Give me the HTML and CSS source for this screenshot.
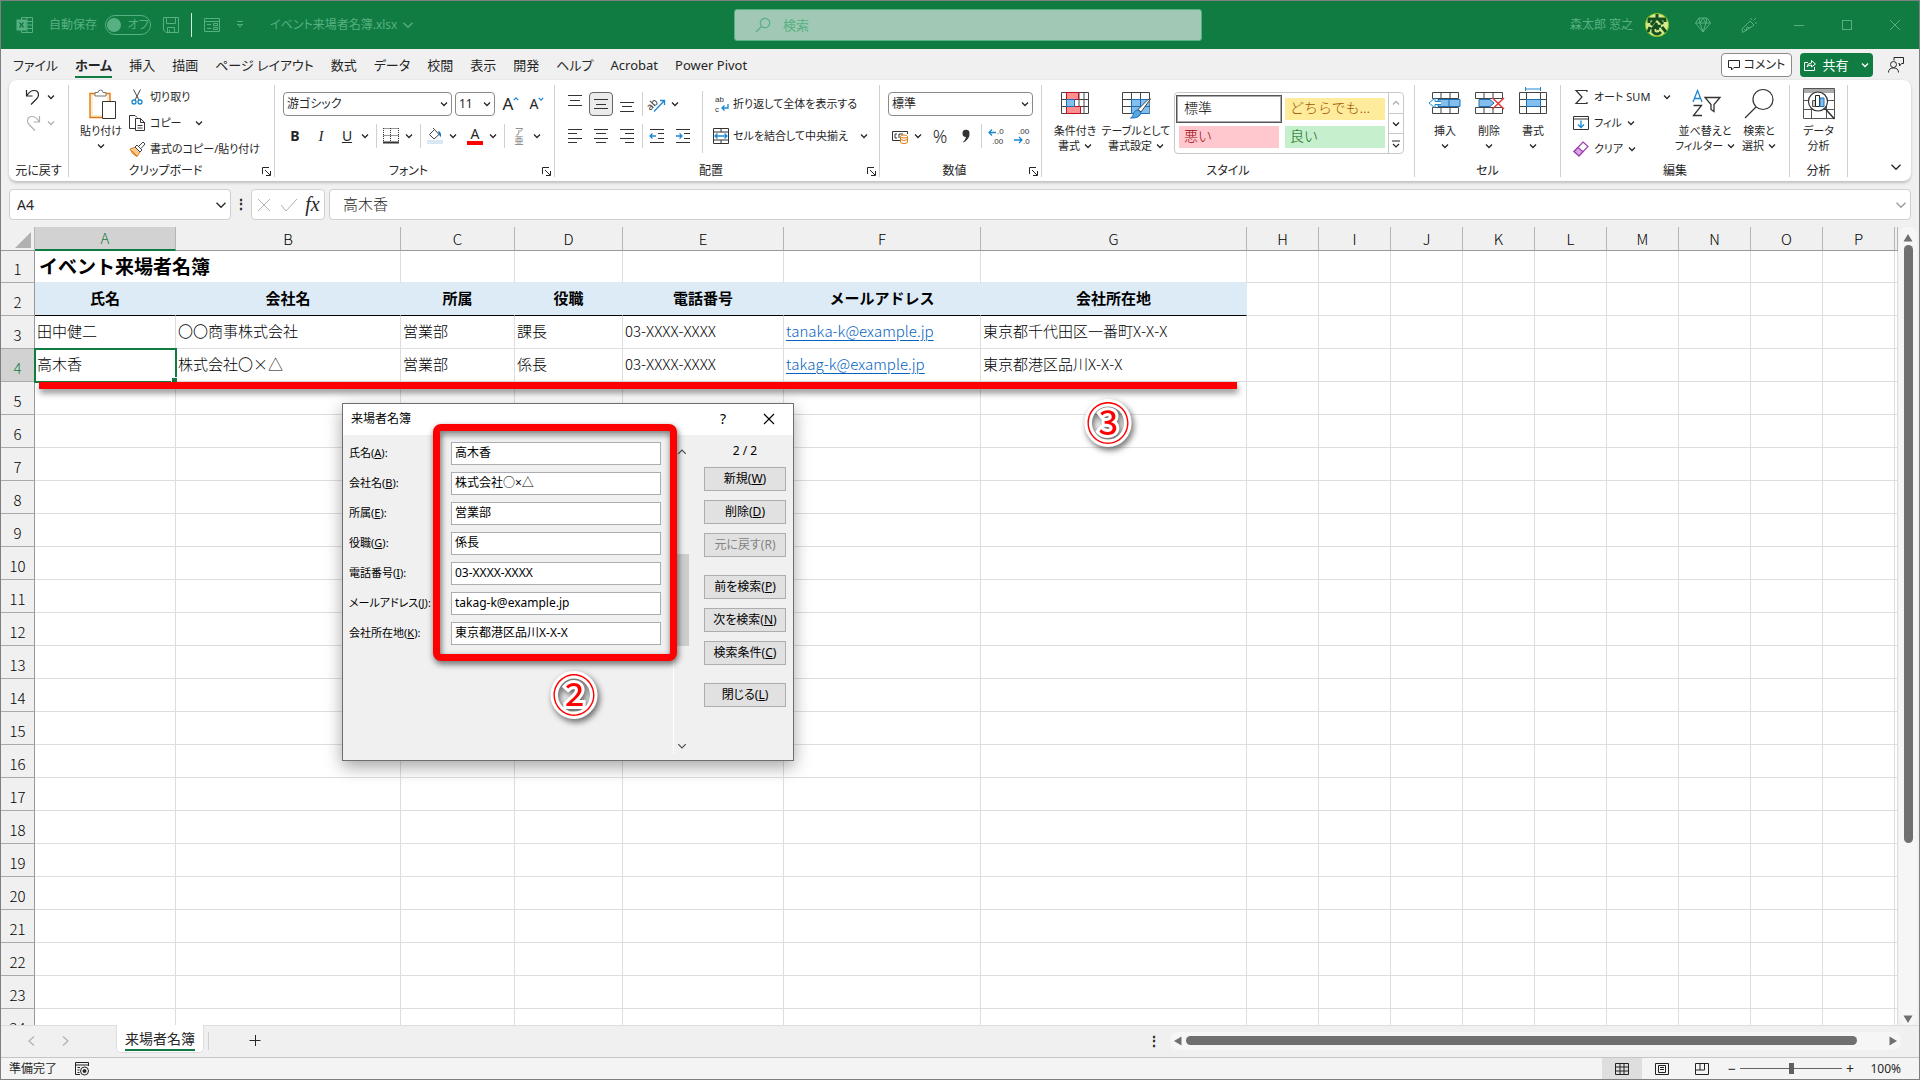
FILE: index.html
```html
<!DOCTYPE html>
<html lang="ja">
<head>
    <meta charset="UTF-8">
    <meta name="viewport" content="width=device-width, initial-scale=1.0">
    <title>イベント来場者名簿.xlsx</title>
    <link rel="stylesheet" href="styles.css">
</head>
<body>
<svg class="sprite" aria-hidden="true">
    <symbol id="chev" viewBox="0 0 8 8"><path d="M1 2.5l3 3 3-3" fill="none" stroke="currentColor" stroke-width="1.3" vector-effect="non-scaling-stroke"/></symbol>
    <symbol id="chev-up" viewBox="0 0 8 8"><path d="M1 5.5l3-3 3 3" fill="none" stroke="currentColor" stroke-width="1.3" vector-effect="non-scaling-stroke"/></symbol>
    <symbol id="launcher" viewBox="0 0 9 9"><path d="M.5 7V.5H7M3 3l5 5M8.500 4v4.500H4" fill="none" stroke="currentColor"/></symbol>
    <symbol id="search" viewBox="0 0 16 16"><g fill="none" stroke="currentColor" stroke-width="1.2"><circle cx="10" cy="6" r="4.700"/><path d="M6.500 9.500L1 15"/></g></symbol>
</svg>
<header class="titlebar">
    <div class="quick">
        <svg class="i16" viewBox="0 0 16 16" fill="none" stroke="currentColor"><path d="M4.500 3V.5h11v15h-11V13M10 .5v15M4.500 4.500h11M10 8h5.500M4.500 11.500h11"/><rect x="0" y="3" width="9" height="10" fill="currentColor"/><path d="M2.500 5.500l4 5M6.500 5.500l-4 5" stroke="#107c41" stroke-width="1.300"/></svg>
        <span class="autosave">自動保存</span>
        <button class="toggle" role="switch" aria-checked="false" aria-label="自動保存"><i></i>オフ</button>
        <button class="tb-save" aria-label="上書き保存"><svg class="i16" viewBox="0 0 16 16" fill="none" stroke="currentColor"><path d="M.5.5h15v15H3l-2.500-2.500zM3.500.5v6h9v-6M4.500 15.500v-5h7v5M6.500 13v2"/></svg></button>
        <span class="tb-sep"></span>
        <button aria-label="フォーム"><svg class="i16" viewBox="0 0 16 16" fill="none" stroke="currentColor"><path d="M.5 1.500h15v13H.5zM.5 4.500h15M3 7.500h4M3 11.500h4M9.500 6.500h4v2h-4zM9.500 10.500h4v2h-4z"/></svg></button>
        <button class="tb-more" aria-label="カスタマイズ"><svg class="i8" viewBox="0 0 8 8" fill="none" stroke="currentColor"><path d="M1 .5h6M1.500 3.500L4 6l2.500-2.500z"/></svg></button>
        <button class="filename">イベント来場者名簿.xlsx <svg class="i12"><use href="#chev"/></svg></button>
    </div>
    <label class="search"><svg class="i16"><use href="#search"/></svg><input type="text" placeholder="検索" aria-label="検索"></label>
    <div class="account">
        <span>森太郎 窓之</span>
        <svg class="avatar" viewBox="0 0 24 24"><circle cx="12" cy="12" r="12" fill="#8fc31f"/><circle cx="12" cy="12" r="11" fill="#d6e98f"/><path d="M12 1v4M3 6h18M4 6v4M20 6v3M10 7L6 12M14 7l4 4M12 10l-3 4 7-1M5 14l-2 5M8 15v4q4 4 8 0M12 14l1 3M17 14l4 5" stroke="#14501f" stroke-width="3" fill="none"/></svg>
        <svg class="i16" viewBox="0 0 16 16" fill="none" stroke="currentColor"><path d="M4 1h8l3.500 5L8 15 .5 6zM.5 6h15M4 1l1 5 3 9 3-9 1-5M5 6l3-5 3 5"/></svg>
        <svg class="i16" viewBox="0 0 16 16" fill="none" stroke="currentColor"><path d="M9 4l4 4-8 5.500-3.500 2L1 12zM3 12l2 2M5 14l1-4 3 1M10 1v2M12.500 3.500L15 1M14 6h2"/></svg>
        <button aria-label="最小化"><svg class="i12" viewBox="0 0 12 12"><path d="M1 6.500h10" stroke="currentColor"/></svg></button>
        <button aria-label="最大化"><svg class="i12" viewBox="0 0 12 12"><rect x="1.500" y="1.500" width="9" height="9" fill="none" stroke="currentColor"/></svg></button>
        <button aria-label="閉じる"><svg class="i12" viewBox="0 0 12 12"><path d="M1 1l10 10M11 1L1 11" stroke="currentColor"/></svg></button>
    </div>
</header>

<nav class="tabs">
    <a href="#">ファイル</a>
    <a href="#" class="active" aria-current="page">ホーム</a>
    <a href="#">挿入</a>
    <a href="#">描画</a>
    <a href="#">ページ レイアウト</a>
    <a href="#">数式</a>
    <a href="#">データ</a>
    <a href="#">校閲</a>
    <a href="#">表示</a>
    <a href="#">開発</a>
    <a href="#">ヘルプ</a>
    <a href="#">Acrobat</a>
    <a href="#">Power Pivot</a>
    <div class="tab-actions">
        <button class="comment"><svg class="i12" viewBox="0 0 12 12" fill="none" stroke="currentColor"><path d="M.5 1.500h11v7H6L3.500 11V8.500h-3z"/></svg>コメント</button>
        <button class="share"><svg class="i12" viewBox="0 0 12 12" fill="none" stroke="currentColor"><path d="M4 3.500H.5v8h10V8M3 8q.5-4 4.500-4V1.500L11.500 5 7.500 8V6Q4.500 6 3 8z"/></svg>共有<svg class="i8"><use href="#chev"/></svg></button>
        <button aria-label="共同編集者"><svg class="i16" viewBox="0 0 16 16" fill="none" stroke="currentColor"><path d="M6 3.500V.5h9.500v6h-2l-2 2.500V6.500h-1M.5 15.500q0-4.500 5-4.500t5 4.500"/><circle cx="5.500" cy="7.500" r="3"/></svg></button>
    </div>
</nav>

<section class="ribbon">
    <div class="group g-undo">
        <div class="body">
            <div class="undo-row"><button aria-label="元に戻す"><svg class="i16" viewBox="0 0 16 16" fill="none" stroke="currentColor" stroke-width="1.200"><path d="M1.500 1v6h6M1.500 7Q5 1.500 9 1.500q4.500 0 4.500 4.500 0 2-2 4L6 15.500"/></svg></button><svg class="i8"><use href="#chev"/></svg></div>
            <div class="undo-row off"><button disabled aria-label="やり直し"><svg class="i16" viewBox="0 0 16 16" fill="none" stroke="currentColor" stroke-width="1.200"><path d="M14.500 1v6h-6M14.500 7Q11 1.500 7 1.500 2.500 1.500 2.500 6q0 2 2 4l5.500 5.500"/></svg></button><svg class="i8"><use href="#chev"/></svg></div>
        </div>
        <div class="label"><span>元に戻す</span></div>
    </div>
    <div class="group g-clip">
        <div class="body">
            <button class="big w56"><svg class="i32" viewBox="0 0 32 32" fill="none"><path d="M5 5.500h20v24H5z" fill="#fdeccb" stroke="#e07a10" stroke-width="1.400"/><path d="M8 8h14v19H8z" fill="#fff"/><path d="M10 8V4.500h3Q13 2 15.500 2T18 4.500h3V8z" fill="#fff" stroke="#777"/><path d="M17.500 13.500h13v17h-13z" fill="#fff" stroke="#333"/></svg><span>貼り付け</span><svg class="i8"><use href="#chev"/></svg></button>
            <div class="stack">
                <button><svg class="i16" viewBox="0 0 16 16" fill="none"><path d="M4.500.5L10 11M11.500.5L6 11" stroke="#444"/><circle cx="5" cy="13" r="2" stroke="#1b87d0" stroke-width="1.300"/><circle cx="11" cy="13" r="2" stroke="#1b87d0" stroke-width="1.300"/></svg>切り取り</button>
                <button><svg class="i16" viewBox="0 0 16 16" fill="#fff" stroke="#333"><path d="M6 13.500H.5V.5H6L8 2.500"/><path d="M6.500 3.500h5l4 4v8h-9zM11.500 3.500v4h4M8.500 10.500h5M8.500 13h5"/></svg>コピー<svg class="i8 far"><use href="#chev"/></svg></button>
                <button><svg class="i16" viewBox="0 0 16 16"><path d="M1 8l6-2 4 5-3 4.500q-5-2-7-7.500z" fill="#fbc98a" stroke="#e07a10"/><path d="M3 10l5 5" stroke="#e07a10"/><path d="M6 6l2-2 5 5-2 2zM9.500 5.500L14 1l2 2-4 4.500" fill="#fff" stroke="#444"/></svg>書式のコピー/貼り付け</button>
            </div>
        </div>
        <div class="label"><span>クリップボード</span><svg class="i9"><use href="#launcher"/></svg></div>
    </div>
    <div class="group g-font">
        <div class="body rows">
            <div class="row fields">
                <div class="combo w169"><select aria-label="フォント"><option>游ゴシック</option></select><svg class="i8"><use href="#chev"/></svg></div>
                <div class="combo w40"><select aria-label="フォント サイズ"><option>11</option></select><svg class="i8"><use href="#chev"/></svg></div>
                <button class="ib letter" aria-label="拡大">A<svg class="i6"><use href="#chev-up"/></svg></button>
                <button class="ib letter small" aria-label="縮小">A<svg class="i6"><use href="#chev"/></svg></button>
            </div>
            <div class="row">
                <button class="ib bold">B</button>
                <button class="ib italic">I</button>
                <span class="split"><button class="ib under">U</button><svg class="i8"><use href="#chev"/></svg></span>
                <span class="sep"></span>
                <span class="split"><button class="ib" aria-label="罫線"><svg class="i16" viewBox="0 0 16 16" fill="none" stroke="#333"><path d="M.5.5h15M.5 7.500h15M.5 0v14M7.500 0v14M15.500 0v14" stroke-dasharray="1 1"/><path d="M0 14.500h16" stroke-width="2"/></svg></button><svg class="i8"><use href="#chev"/></svg></span>
                <span class="sep"></span>
                <span class="split"><button class="ib" aria-label="塗りつぶし"><svg class="i16" viewBox="0 0 16 16" fill="none"><path d="M7.500 1.500l4.500 5-5 4.500-4.500-4.500zM7.500 1.500L6 0" stroke="#444"/><path d="M11 3q3.500.5 3 6-2-1-3-6z" fill="#1b70b8"/><path d="M0 12h16v4H0z" fill="#d9e8f5"/></svg></button><svg class="i8"><use href="#chev"/></svg></span>
                <span class="split"><button class="ib color-a"><span>A</span></button><svg class="i8"><use href="#chev"/></svg></span>
                <span class="sep"></span>
                <span class="split"><button class="ib ruby"><span>ア</span><span>亜</span></button><svg class="i8"><use href="#chev"/></svg></span>
            </div>
        </div>
        <div class="label"><span>フォント</span><svg class="i9"><use href="#launcher"/></svg></div>
    </div>
    <div class="group g-align">
        <div class="body">
            <div class="rows">
                <div class="row">
                    <button class="ib" aria-label="上揃え"><svg class="i16" viewBox="0 0 16 16" stroke="#333"><path d="M1 .5h14M3 5.500h10M1 10.500h14" transform="translate(0 -1)"/></svg></button>
                    <button class="ib pressed" aria-label="上下中央揃え"><svg class="i16" viewBox="0 0 16 16" stroke="#333"><path d="M1 3.500h14M3 8.500h10M1 12.500h14"/></svg></button>
                    <button class="ib" aria-label="下揃え"><svg class="i16" viewBox="0 0 16 16" stroke="#333"><path d="M1 6.500h14M3 10.500h10M1 15.500h14"/></svg></button>
                    <span class="sep"></span>
                    <span class="split"><button class="ib" aria-label="方向"><svg class="i16" viewBox="0 0 16 16" fill="none"><text x="-3" y="11" font-size="10" fill="#333" transform="rotate(-45 4 8)">ab</text><path d="M5 15.500L15 5M11 4.500h4.500V9" stroke="#1b87d0" stroke-width="1.300"/></svg></button><svg class="i8"><use href="#chev"/></svg></span>
                </div>
                <div class="row">
                    <button class="ib" aria-label="左揃え"><svg class="i16" viewBox="0 0 16 16" stroke="#333"><path d="M1 1.500h14M1 5.500h9M1 10.500h14M1 14.500h9"/></svg></button>
                    <button class="ib" aria-label="中央揃え"><svg class="i16" viewBox="0 0 16 16" stroke="#333"><path d="M1 1.500h14M3 5.500h10M1 10.500h14M3 14.500h10"/></svg></button>
                    <button class="ib" aria-label="右揃え"><svg class="i16" viewBox="0 0 16 16" stroke="#333"><path d="M1 1.500h14M6 5.500h9M1 10.500h14M6 14.500h9"/></svg></button>
                    <span class="sep"></span>
                    <button class="ib" aria-label="インデントを減らす"><svg class="i16" viewBox="0 0 16 16" fill="none" stroke="#333"><path d="M1 1.500h14M9 5.500h6M9 10.500h6M1 14.500h14"/><path d="M7 8H1M3.500 5.500L1 8l2.500 2.500" stroke="#1b87d0" stroke-width="1.300"/></svg></button>
                    <button class="ib" aria-label="インデントを増やす"><svg class="i16" viewBox="0 0 16 16" fill="none" stroke="#333"><path d="M1 1.500h14M9 5.500h6M9 10.500h6M1 14.500h14"/><path d="M1 8h6M4.500 5.500L7 8l-2.500 2.500" stroke="#1b87d0" stroke-width="1.300"/></svg></button>
                </div>
            </div>
            <span class="sep tall"></span>
            <div class="rows wide">
                <button class="text-btn"><svg class="i16 tiny" viewBox="0 0 16 16" fill="none"><text x="2" y="6" fill="#333">ab</text><text x="2" y="16" fill="#333">c</text><path d="M15 8v4H9M11.500 9.500L9 12l2.500 2.500" stroke="#1b87d0" stroke-width="1.300"/></svg>折り返して全体を表示する</button>
                <button class="text-btn"><svg class="i16" viewBox="0 0 16 16" fill="none"><path d="M.5.5h15v15H.5zM.5 4h15M.5 12h15M8 .5V4M8 12v3.500" stroke="#333"/><path d="M2 8h12M4.500 5.500L2 8l2.500 2.500M11.500 5.500L14 8l-2.500 2.500" stroke="#1b87d0" stroke-width="1.300"/></svg>セルを結合して中央揃え<svg class="i8 far"><use href="#chev"/></svg></button>
            </div>
        </div>
        <div class="label"><span>配置</span><svg class="i9"><use href="#launcher"/></svg></div>
    </div>
    <div class="group g-num">
        <div class="body rows">
            <div class="row fields">
                <div class="combo w145"><select aria-label="数値の書式"><option>標準</option></select><svg class="i8"><use href="#chev"/></svg></div>
            </div>
            <div class="row">
                <span class="split"><button class="ib" aria-label="通貨"><svg class="i16" viewBox="0 0 16 16" fill="none"><path d="M8 12.500H.5v-9h15V6M5 6H3v4h2M7 10V6h2M11 6H9" stroke="#333"/><path d="M8.500 8.500v5.500q0 1.500 3.500 1.500t3.500-1.500V8.500" fill="#fff" stroke="#e07a10"/><ellipse cx="12" cy="8.500" rx="3.500" ry="1.500" fill="#fff" stroke="#e07a10"/><path d="M8.500 11.500q3.500 2 7 0" stroke="#e07a10"/></svg></button><svg class="i8"><use href="#chev"/></svg></span>
                <button class="ib percent">%</button>
                <button class="ib" aria-label="桁区切り"><svg class="i16" viewBox="0 0 16 16" fill="#333"><path d="M4.500 5.500a3.500 3.500 0 0 1 7-.5q.5 6-6 9.500l-.5-.5q2.500-2 3-5-3.500 0-3.500-3.500z"/></svg></button>
                <span class="sep"></span>
                <button class="ib" aria-label="小数点以下の表示桁数を増やす"><svg class="i16 tiny" viewBox="0 0 16 16" fill="none"><path d="M8 4.500H1M4 1.500l-3 3 3 3" stroke="#1b87d0" stroke-width="1.300"/><text x="9" y="6" fill="#333">.0</text><text x="4" y="16" fill="#333">.00</text></svg></button>
                <button class="ib" aria-label="小数点以下の表示桁数を減らす"><svg class="i16 tiny" viewBox="0 0 16 16" fill="none"><path d="M0 12h8M5 9l3 3-3 3" stroke="#1b87d0" stroke-width="1.300"/><text x="4" y="6" fill="#333">.00</text><text x="9" y="16" fill="#333">.0</text></svg></button>
            </div>
        </div>
        <div class="label"><span>数値</span><svg class="i9"><use href="#launcher"/></svg></div>
    </div>
    <div class="group g-style">
        <div class="body">
            <button class="big w50"><svg class="i32" viewBox="0 0 32 32" fill="none"><path d="M2.500 4.500h27v21h-27zM2.500 11.500h27M2.500 18.500h27M7.500 4.500v21M20 4.500v21M25 4.500v21" stroke="#444"/><path d="M7.500 4.500h12v7h-12zM7.500 18.500h14v7h-14z" fill="#ff8f8f" stroke="#c1121f"/><path d="M7.500 11.500h8v7h-8z" fill="#83beec" stroke="#1b70b8"/></svg><span>条件付き</span><span>書式 <svg class="i8"><use href="#chev"/></svg></span></button>
            <button class="big w68"><svg class="i32" viewBox="0 0 32 32" fill="none"><path d="M2.500 4.500h27v21h-27z" fill="#fff" stroke="#444"/><path d="M11.500 11.500h18v14h-18z" fill="#83beec"/><path d="M2.500 11.500h27M2.500 18.500h27M11.500 4.500v21M20.500 4.500v21" stroke="#444"/><path d="M11.500 11.500h18M11.500 11.500v14h18M20.500 11.500v14M11.500 18.500h18" stroke="#1b70b8"/><path d="M30.500 11L21 24l-3-2.500L28 11.500z" fill="#fff" stroke="#444"/><path d="M18 22l3 2.500q-1 6-10.500 5.500 3-1 3-5 2-3.500 4.500-3z" fill="#5aa6e0" stroke="#1b70b8"/></svg><span>テーブルとして</span><span>書式設定 <svg class="i8"><use href="#chev"/></svg></span></button>
            <div class="gallery">
                <div class="cells">
                    <button class="cell chosen">標準</button>
                    <button class="cell neutral">どちらでも...</button>
                    <button class="cell bad">悪い</button>
                    <button class="cell good">良い</button>
                </div>
                <div class="gallery-nav">
                    <button class="off" aria-label="上へ"><svg class="i8"><use href="#chev-up"/></svg></button>
                    <button aria-label="下へ"><svg class="i8"><use href="#chev"/></svg></button>
                    <button aria-label="その他"><svg class="i8" viewBox="0 0 8 8" fill="none" stroke="currentColor" stroke-width="1.200"><path d="M0 1h8M1 4l3 3 3-3"/></svg></button>
                </div>
            </div>
        </div>
        <div class="label"><span>スタイル</span></div>
    </div>
    <div class="group g-cell">
        <div class="body">
            <button class="big w44"><svg class="i32" viewBox="0 0 32 32" fill="#fff" stroke="#444"><path d="M3.500 4.500h26v6h-26zM3.500 19.500h26v6h-26zM12 4.500v6M21 4.500v6M12 19.500v6M21 19.500v6"/><path d="M9 11.500h22v7H9zM20 11.500v7" fill="#83beec" stroke="#1b70b8"/><path d="M12 13.500H6V10L0 15l6 5v-3.500h6" stroke="#1b87d0"/></svg><span>挿入</span><svg class="i8"><use href="#chev"/></svg></button>
            <button class="big w44"><svg class="i32" viewBox="0 0 32 32" fill="#fff" stroke="#444"><path d="M2.500 4.500h27v6h-27zM2.500 19.500h27v6h-27zM11 4.500v6M20 4.500v6M11 19.500v6M20 19.500v6"/><path d="M6 11.500h11l4 3.500-4 3.500H6z" fill="#83beec" stroke="#1b70b8"/><path d="M19.500 10L31 21M31 10L19.500 21" stroke="#e53935" stroke-width="1.500"/></svg><span>削除</span><svg class="i8"><use href="#chev"/></svg></button>
            <button class="big w44"><svg class="i32" viewBox="0 0 32 32" fill="#fff" stroke="#444"><path d="M2.500 4.500h27v21h-27zM2.500 11.500h27M2.500 18.500h27M9.500 4.500v21M23.500 4.500v21"/><path d="M9.500 11.500h14v7h-14z" fill="#83beec" stroke="#1b70b8"/><path d="M8.500 1h15M8.500-1v4M23.500-1v4" stroke="#1b87d0"/></svg><span>書式</span><svg class="i8"><use href="#chev"/></svg></button>
        </div>
        <div class="label"><span>セル</span></div>
    </div>
    <div class="group g-edit">
        <div class="body">
            <div class="stack">
                <button><svg class="i16" viewBox="0 0 16 16" fill="none" stroke="#333" stroke-width="1.200"><path d="M14 3V1.500H3L9 8l-6 6.500h11V13"/></svg>オート SUM<svg class="i8 far"><use href="#chev"/></svg></button>
                <button><svg class="i16" viewBox="0 0 16 16" fill="none" stroke="#333"><path d="M.5 1.500h15v13H.5zM.5 4h15"/><path d="M8 5.500V12M5 9.500L8 12.500l3-3" stroke="#1b87d0" stroke-width="1.300"/></svg>フィル<svg class="i8"><use href="#chev"/></svg></button>
                <button><svg class="i16" viewBox="0 0 16 16" fill="#fff" stroke="#9b3fae" stroke-width="1.200"><path d="M10 1l5 4.500L6 15 1 10.500z"/><path d="M5 6.500L1 10.500 6 15l4-4.500z" fill="#d9a3e3"/></svg>クリア<svg class="i8"><use href="#chev"/></svg></button>
            </div>
            <button class="big w56"><svg class="i32" viewBox="0 0 32 32" fill="none" stroke-width="1.300"><path d="M4 14L8.500 2.500 13 14M5.500 10.500h6" stroke="#1b87d0"/><path d="M4.500 17.500h8l-8 10h8.500M16 9.500h15l-6 7v7l-3-2v-5z" stroke="#333"/></svg><span>並べ替えと</span><span>フィルター <svg class="i8"><use href="#chev"/></svg></span></button>
            <button class="big w52"><svg class="i32" viewBox="0 0 32 32" fill="none" stroke="#333" stroke-width="1.200"><circle cx="20" cy="11.500" r="10"/><path d="M13 19L2 30"/></svg><span>検索と</span><span>選択 <svg class="i8"><use href="#chev"/></svg></span></button>
        </div>
        <div class="label"><span>編集</span></div>
    </div>
    <div class="group g-data">
        <div class="body">
            <button class="big"><svg class="i32" viewBox="0 0 32 32" fill="#fff" stroke="#555"><path d="M.5.5h31v30H.5zM.5 12.500h31M.5 21.500h31M8.500 12v18M23.500 12v18" /><path d="M1 1h30v4H1z" fill="#aaa" stroke="none"/><circle cx="15" cy="13.500" r="9.500" stroke="#333" stroke-width="1.200"/><path d="M9.500 12.500h4v6h-4z" fill="#ccc"/><path d="M12.500 7.500h4v11h-4z" stroke="#222"/><path d="M17 10h4v8.500h-4z" fill="#83beec" stroke="#1b70b8"/><path d="M22 20.500L31.500 31" stroke="#333" stroke-width="1.500"/></svg><span>データ</span><span>分析</span></button>
        </div>
        <div class="label"><span>分析</span></div>
    </div>
    <button class="collapse" aria-label="リボンを折りたたむ"><svg class="i12"><use href="#chev"/></svg></button>
</section>

<div class="formula-bar">
    <div class="combo name-box"><input type="text" value="A4" aria-label="名前ボックス"><svg class="i12"><use href="#chev"/></svg></div>
    <span class="dots">⋮</span>
    <div class="fx">
        <button class="off" aria-label="キャンセル"><svg class="i16" viewBox="0 0 16 16"><path d="M2 2l12 12M14 2L2 14" stroke="currentColor"/></svg></button>
        <button class="off" aria-label="入力"><svg class="i16" viewBox="0 0 16 16"><path d="M0 8l5 6L16 2" fill="none" stroke="currentColor"/></svg></button>
        <button class="fx-label">fx</button>
    </div>
    <div class="combo formula"><input type="text" value="高木香" aria-label="数式バー"><svg class="i12"><use href="#chev"/></svg></div>
</div>

<main class="sheet">
    <div class="grid-wrap">
        <table class="grid">
            <colgroup>
                <col class="c-head"><col class="c-a"><col class="c-b"><col class="c-c"><col class="c-d"><col class="c-e"><col class="c-f"><col class="c-g">
                <col class="c-n" span="9"><col>
            </colgroup>
            <thead>
                <tr><th class="corner"><svg viewBox="0 0 16 16"><path d="M16 0v16H0z" fill="#b1b1b1"/></svg></th><th class="on">A</th><th>B</th><th>C</th><th>D</th><th>E</th><th>F</th><th>G</th><th>H</th><th>I</th><th>J</th><th>K</th><th>L</th><th>M</th><th>N</th><th>O</th><th>P</th><th></th></tr>
            </thead>
            <tbody id="rows"></tbody>
        </table>
    </div>
    <div class="vscroll">
        <svg viewBox="0 0 10 8"><path d="M5 0l4.500 7.500h-9z" fill="#707070"/></svg>
        <div class="vtrack"><div class="vthumb"></div></div>
        <svg viewBox="0 0 10 8"><path d="M5 8L.5.5h9z" fill="#707070"/></svg>
    </div>
</main>

<div class="sheet-tabs">
    <button class="off" aria-label="前のシート"><svg class="i12" viewBox="0 0 12 12"><path d="M8 1.500L3 6l5 4.500" fill="none" stroke="currentColor" stroke-width="1.200"/></svg></button>
    <button class="off" aria-label="次のシート"><svg class="i12" viewBox="0 0 12 12"><path d="M4 1.500L9 6l-5 4.500" fill="none" stroke="currentColor" stroke-width="1.200"/></svg></button>
    <a class="sheet-tab" href="#"><span>来場者名簿</span></a>
    <span class="tab-sep"></span>
    <button class="add" aria-label="新しいシート"><svg class="i12" viewBox="0 0 12 12"><path d="M.5 5.500h11M6.500 0v11" stroke="currentColor"/></svg></button>
    <span class="dots">⋮</span>
    <div class="hscroll">
        <svg viewBox="0 0 8 10"><path d="M0 5L7.500.5v9z" fill="#707070"/></svg>
        <div class="htrack"><div class="hthumb"></div></div>
        <svg viewBox="0 0 8 10"><path d="M8 5L.5.5v9z" fill="#707070"/></svg>
    </div>
</div>

<footer class="status">
    <span>準備完了</span>
    <svg class="i14" viewBox="0 0 14 14" fill="none" stroke="#222"><path d="M5 12.500H.5V.5h13V4M.5 3h13M2.500 5.500H5M2.500 8h2M2.500 10.500h2"/><circle cx="9.500" cy="9" r="4"/><circle cx="9.500" cy="9" r="1.500" fill="#222"/></svg>
    <div class="views">
        <button class="current" aria-label="標準"><svg class="i14" viewBox="0 0 14 14" fill="none" stroke="#222"><path d="M.5 1.500h13v11H.5zM5 1.500v11M9 1.500v11M.5 5h13M.5 9h13"/></svg></button>
        <button aria-label="ページ レイアウト"><svg class="i14" viewBox="0 0 14 14" fill="none" stroke="#222"><path d="M.5 1.500h13v11H.5zM3.500 3.500h7v7h-7zM5 5.500h4M5 7.500h4"/></svg></button>
        <button aria-label="改ページ プレビュー"><svg class="i14" viewBox="0 0 14 14" fill="none" stroke="#222"><path d="M.5 1.500h13v11H.5zM.5 8h9V1.500M5 1.500V8"/></svg></button>
    </div>
    <button class="zoom-btn">−</button>
    <input class="zoom" type="range" min="0" max="100" value="50" aria-label="ズーム">
    <button class="zoom-btn">+</button>
    <span class="percent-label">100%</span>
</footer>

<div class="dialog" role="dialog" aria-label="来場者名簿">
    <div class="dialog-title">
        <span>来場者名簿</span>
        <button>?</button>
        <button aria-label="閉じる"><svg class="i12" viewBox="0 0 12 12"><path d="M1 1l10 10M11 1L1 11" stroke="currentColor" stroke-width="1.200"/></svg></button>
    </div>
    <form class="dialog-body">
        <div class="form-rows">
            <label for="f1">氏名(<u>A</u>):</label><input type="text" id="f1" value="高木香">
            <label for="f2">会社名(<u>B</u>):</label><input type="text" id="f2" value="株式会社○×△">
            <label for="f3">所属(<u>E</u>):</label><input type="text" id="f3" value="営業部">
            <label for="f4">役職(<u>G</u>):</label><input type="text" id="f4" value="係長">
            <label for="f5">電話番号(<u>I</u>):</label><input type="text" id="f5" value="03-XXXX-XXXX">
            <label for="f6">メールアドレス(<u>J</u>):</label><input type="text" id="f6" value="takag-k@example.jp">
            <label for="f7">会社所在地(<u>K</u>):</label><input type="text" id="f7" value="東京都港区品川X-X-X">
        </div>
        <div class="dialog-scroll">
            <svg class="i10"><use href="#chev-up"/></svg>
            <div class="dialog-thumb"></div>
            <svg class="i10"><use href="#chev"/></svg>
        </div>
        <div class="dialog-buttons">
            <span>2 / 2</span>
            <button type="button">新規(<u>W</u>)</button>
            <button type="button">削除(<u>D</u>)</button>
            <button type="button" disabled>元に戻す(R)</button>
            <button type="button" class="first">前を検索(<u>P</u>)</button>
            <button type="button">次を検索(<u>N</u>)</button>
            <button type="button">検索条件(<u>C</u>)</button>
            <button type="button" class="first">閉じる(<u>L</u>)</button>
        </div>
    </form>
</div>
<div class="mark-line"></div>
<div class="mark-box"></div>
<span class="mark-num two">②</span>
<span class="mark-num three">③</span>

<script>
    const rows = [
        ['イベント来場者名簿'],
        ['氏名', '会社名', '所属', '役職', '電話番号', 'メールアドレス', '会社所在地'],
        ['田中健二', '〇〇商事株式会社', '営業部', '課長', '03-XXXX-XXXX', 'tanaka-k@example.jp', '東京都千代田区一番町X-X-X'],
        ['高木香', '株式会社〇×△', '営業部', '係長', '03-XXXX-XXXX', 'takag-k@example.jp', '東京都港区品川X-X-X']
    ];

    // メールアドレスだけリンクにする
    function cell(value) {
        return value.includes('@') ? `<a href="mailto:${value}">${value}</a>` : value;
    }

    let html = '';
    for (let r = 1; r <= 24; r++) {
        const data = rows[r - 1] || [];
        html += `<tr class="r${r}"><th class="${r === 4 ? 'on' : ''}">${r}</th>`;
        for (let c = 0; c < 17; c++) {
            html += `<td>${cell(data[c] || '')}</td>`;
        }
        html += '</tr>';
    }
    document.getElementById('rows').innerHTML = html;

    // 最後の入力欄の末尾にカーソルを置く
    const last = document.getElementById('f7');
    last.focus();
    last.setSelectionRange(last.value.length, last.value.length);
</script>
</body>
</html>
```
FILE: styles.css
```css
:root {
    --green: #107c41;
    --muted: #57b083;
    --chrome: #f0f0f0;
    --line: #d0d0d0;
    --grid: #dedede;
    --text: #262626;
    --red: #ff0000;
}
* {
    box-sizing: border-box;
}
body {
    margin: 0;
    height: 100vh;
    overflow: hidden;
    display: flex;
    flex-direction: column;
    position: relative;
    border: 1px solid #7f7f7f;
    background: var(--chrome);
    color: var(--text);
    font: 12px/16px "Noto Sans", "Noto Sans CJK JP", sans-serif;
    font-feature-settings: "palt";
}
button, input, select {
    font: inherit;
    font-feature-settings: inherit;
    color: inherit;
    background: none;
    border: 0;
    padding: 0;
    margin: 0;
}
button {
    display: flex;
    align-items: center;
    justify-content: center;
    white-space: nowrap;
}
input, select {
    min-width: 0;
    outline: none;
}
a {
    color: inherit;
    text-decoration: none;
}
svg {
    flex: none;
    display: block;
    overflow: visible;
}
.sprite {
    display: none;
}
.i6 { width: 6px; height: 6px; color: #1b87d0; }
.i8 { width: 8px; height: 8px; }
.i9 { width: 9px; height: 9px; }
.i10 { width: 10px; height: 10px; }
.i12 { width: 12px; height: 12px; }
.i14 { width: 14px; height: 14px; }
.i16 { width: 16px; height: 16px; }
.i32 { width: 32px; height: 32px; }
.tiny {
    font: 8px "Liberation Sans", sans-serif;
}
.off {
    color: #b0b0b0;
}

/* title bar */
.titlebar {
    flex: none;
    height: 48px;
    display: grid;
    grid-template-columns: minmax(0, 1fr) 468px minmax(0, 1fr);
    align-items: center;
    padding-left: 16px;
    background: var(--green);
    color: var(--muted);
}
.quick {
    display: flex;
    align-items: center;
    gap: 12px;
    white-space: nowrap;
}
.autosave {
    margin-left: 4px;
    margin-right: -4px;
}
.toggle {
    width: 46px;
    height: 20px;
    border: 1px solid var(--muted);
    border-radius: 10px;
    gap: 6px;
}
.toggle i {
    width: 14px;
    height: 14px;
    border-radius: 50%;
    background: var(--muted);
}
.tb-sep {
    width: 1px;
    height: 24px;
    background: #d5eadf;
}
.tb-more {
    margin-left: 4px;
}
.filename {
    margin-left: 14px;
    font-size: 12px;
    gap: 5px;
}
.search {
    height: 32px;
    display: flex;
    align-items: center;
    gap: 12px;
    padding-left: 20px;
    background: #a0c8b4;
    border: 1px solid var(--muted);
    border-radius: 3px;
    font-size: 13px;
}
.search input::placeholder {
    color: var(--muted);
    opacity: 1;
}
.account {
    justify-self: end;
    display: flex;
    align-items: center;
    white-space: nowrap;
    gap: 30px;
    margin-right: 18px;
}
.account .avatar {
    width: 24px;
    height: 24px;
    margin: 0 -4px 0 -18px;
}
.account button {
    margin-left: 6px;
}

/* tabs */
.tabs {
    flex: none;
    height: 31px;
    display: flex;
    align-items: center;
    gap: 17px;
    padding: 0 15px 0 12px;
    font-size: 13px;
    white-space: nowrap;
}
.tabs a {
    padding: 5px 0 3px;
    border-bottom: 2px solid transparent;
}
.tabs .active {
    font-weight: bold;
    border-color: var(--green);
}
.tab-actions {
    display: flex;
    align-items: center;
    gap: 8px;
    margin-left: auto;
}
.tab-actions button {
    height: 24px;
    gap: 4px;
}
.tab-actions button:last-child {
    margin-left: 7px;
}
.tab-actions .comment {
    width: 71px;
    background: #fff;
    border: 1px solid #8a8a8a;
    border-radius: 4px;
    font-size: 12px;
}
.tab-actions .share {
    width: 73px;
    background: var(--green);
    color: #fff;
    border-radius: 4px;
    gap: 6px;
}
.share .i8 {
    margin-left: 6px;
}

/* ribbon */
.ribbon {
    flex: none;
    height: 102px;
    display: flex;
    margin: 0 8px;
    padding: 5px 0 4px;
    background: #fff;
    border-radius: 8px;
    border-bottom: 1px solid #c6c6c6;
    box-shadow: 0 1px 3px rgba(0, 0, 0, 0.2);
}
.group {
    flex: none;
    display: flex;
    flex-direction: column;
    justify-content: space-between;
    border-right: 1px solid var(--line);
}
.g-undo { width: 60px; }
.g-clip { width: 206px; }
.g-font { width: 280px; }
.g-align { width: 325px; }
.g-num { width: 162px; }
.g-style { width: 373px; }
.g-cell { width: 146px; }
.g-edit { width: 229px; }
.g-data { width: 58px; }
.body {
    display: flex;
}
.g-undo .body {
    flex-direction: column;
    gap: 2px;
    padding-left: 16px;
}
.undo-row {
    height: 24px;
    display: flex;
    align-items: center;
    gap: 6px;
}
.g-clip .body {
    padding-left: 4px;
}
.g-font .body, .g-num .body, .g-align .body {
    padding-left: 7px;
}
.g-style .body, .g-cell .body {
    padding-left: 8px;
}
.g-edit .body {
    padding-left: 12px;
}
.g-data .body {
    justify-content: center;
}
.label {
    display: flex;
    line-height: 12px;
}
.label span {
    flex: 1;
    text-align: center;
}
.label .i9 {
    margin: 2px 3px 0 0;
}
.big {
    flex-direction: column;
    justify-content: flex-start;
    padding-top: 3px;
    font-size: 11px;
    line-height: 15px;
}
.big .i32 {
    margin-bottom: 3px;
}
.big > .i8 {
    margin-top: 4px;
}
.big span {
    display: flex;
    align-items: center;
    gap: 4px;
}
.w44 { width: 44px; }
.w50 { width: 50px; }
.w52 { width: 52px; }
.w56 { width: 56px; }
.w68 { width: 68px; margin: 0 4px 0 2px; }
.w40 { width: 40px; }
.w145 { width: 145px; }
.w169 { width: 169px; }
.stack {
    display: flex;
    flex-direction: column;
    align-items: flex-start;
    gap: 2px;
}
.stack button {
    height: 24px;
    gap: 5px;
    font-size: 11px;
}
.far {
    margin-left: 8px;
}
.g-edit .stack {
    width: 104px;
}
.rows {
    display: flex;
    flex-direction: column;
    gap: 8px;
    padding-top: 7px;
}
.row {
    height: 24px;
    display: flex;
    align-items: center;
}
.fields {
    padding-left: 1px;
}
.fields .combo {
    margin-right: 3px;
}
.combo {
    display: grid;
    align-items: center;
    background: #fff;
}
.combo > * {
    grid-area: 1 / 1;
}
.combo select, .combo input {
    appearance: none;
    height: 100%;
    padding: 0 3px;
}
.combo svg {
    justify-self: end;
    margin-right: 3px;
    pointer-events: none;
}
.row .combo {
    height: 24px;
    border: 1px solid #8a8a8a;
    border-radius: 4px;
}
.ib {
    width: 26px;
    height: 24px;
    font-size: 14px;
}
.split {
    display: flex;
    align-items: center;
    width: 38px;
    margin-right: 2px;
}
.split > .i8 {
    margin-left: 1px;
}
.sep {
    width: 1px;
    height: 24px;
    margin: 0 1px 0 2px;
    background: var(--line);
}
.sep.tall {
    height: 62px;
    margin: 6px 10px 0 6px;
}
.letter {
    font-size: 17px;
    align-items: center;
}
.letter svg {
    align-self: flex-start;
    margin-top: 4px;
}
.letter.small {
    font-size: 14px;
}
.bold {
    font-weight: bold;
}
.italic {
    font-family: "Liberation Serif", serif;
    font-style: italic;
    font-size: 15px;
}
.under {
    text-decoration: underline;
}
.color-a span {
    width: 16px;
    height: 18px;
    line-height: 14px;
    border-bottom: 4px solid var(--red);
}
.ruby {
    flex-direction: column;
    color: #777;
    font-size: 9px;
    line-height: 9px;
}
.percent {
    font-size: 18px;
    font-weight: 300;
}
.pressed {
    width: 24px;
    margin: 0 1px;
    background: #ebebeb;
    border: 1px solid #666;
    border-radius: 4px;
}
.text-btn {
    height: 24px;
    gap: 4px;
    align-self: flex-start;
    font-size: 11px;
}
.gallery {
    display: flex;
    height: 62px;
    margin-top: 7px;
    border: 1px solid #c8c8c8;
    border-radius: 4px;
}
.cells {
    display: grid;
    grid-template-columns: 106px 106px;
    grid-auto-rows: 28px;
    padding: 2px 0 0 1px;
}
.cell {
    border: 3px solid transparent;
    background-clip: padding-box;
    justify-content: flex-start;
    padding: 0 0 4px 5px;
    font-size: 14px;
    font-weight: 300;
    font-family: "Noto Sans CJK JP", sans-serif;
    font-feature-settings: normal;
}
.cell.chosen {
    border: 1px solid #555;
    outline: 1px solid #aaa;
    outline-offset: -2px;
    padding-left: 7px;
    color: #000;
}
.neutral { background-color: #ffeb9c; color: #9c5700; }
.bad { background-color: #ffc7ce; color: #9c0006; }
.good { background-color: #c6efce; color: #006100; }
.gallery-nav {
    display: grid;
    grid-template-rows: repeat(3, 1fr);
    width: 15px;
    border-left: 1px solid #c8c8c8;
}
.gallery-nav button + button {
    border-top: 1px solid #c8c8c8;
}
.collapse {
    margin: auto 9px 4px auto;
}

/* formula bar */
.formula-bar {
    flex: none;
    display: flex;
    height: 31px;
    margin: 7px 8px;
    font-size: 14px;
}
.formula-bar > div {
    background: #fff;
    border: 1px solid var(--line);
    border-radius: 4px;
}
.name-box {
    width: 222px;
}
.formula-bar .combo input {
    padding-left: 7px;
}
.dots {
    width: 20px;
    text-align: center;
    line-height: 30px;
    font-weight: bold;
}
.fx {
    width: 74px;
    display: flex;
    align-items: center;
    justify-content: space-around;
}
.fx-label {
    font: italic 20px "Liberation Serif", serif;
}
.formula-bar .formula {
    flex: 1;
    margin-left: 4px;
    font-size: 15px;
    font-weight: 300;
}
.formula-bar .formula input {
    padding: 0 0 3px 13px;
    font-family: "Noto Sans CJK JP", sans-serif;
    font-feature-settings: normal;
}
.formula svg {
    color: #999;
}

/* sheet */
.sheet {
    flex: 1;
    min-height: 0;
    display: flex;
}
.grid-wrap {
    flex: 1;
    min-width: 0;
    overflow: hidden;
}
.grid {
    width: 100%;
    table-layout: fixed;
    border-spacing: 0;
    background: #fff;
    color: #000;
    font: 15px/22px "Noto Sans CJK JP", sans-serif;
    font-feature-settings: normal;
    font-kerning: none;
}
.c-head { width: 34px; }
.c-a { width: 141px; }
.c-b { width: 225px; }
.c-c { width: 114px; }
.c-d { width: 108px; }
.c-e { width: 161px; }
.c-f { width: 197px; }
.c-g { width: 266px; }
.c-n { width: 72px; }
.grid th {
    padding: 0;
    background: var(--chrome);
    border-right: 1px solid #999;
    font-weight: 300;
}
.grid thead th {
    height: 24px;
    border-bottom: 1px solid #999;
    border-right-color: #b5b5b5;
    line-height: 22px;
}
.grid thead .on {
    background: #d2d2d2;
    color: var(--green);
    border-bottom: 2px solid var(--green);
}
.corner svg {
    width: 16px;
    height: 16px;
    margin: 3px 0 0 14px;
}
.grid tbody th {
    height: 33px;
    padding-bottom: 2px;
    border-bottom: 1px solid #aaa;
    vertical-align: bottom;
}
.grid tbody .on {
    background: #d2d2d2;
    color: var(--green);
}
.grid td {
    padding: 0 2px 2px;
    border-right: 1px solid var(--grid);
    border-bottom: 1px solid var(--grid);
    white-space: nowrap;
    font-weight: 300;
}
.grid .r1 th {
    height: 32px;
}
.r1 td:nth-child(-n+8) {
    border-bottom-color: #ddebf7;
}
.grid .r1 td:nth-child(2) {
    border-right-color: transparent;
    padding-left: 4px;
    font-size: 19px;
    font-weight: bold;
}
.grid .r2 td:nth-child(-n+8) {
    background: #ddebf7;
    border-right-color: #ddebf7;
    border-bottom-color: #000;
    text-align: center;
    font-weight: bold;
}
.r4 td:nth-child(2) {
    position: relative;
    outline: 2px solid var(--green);
    outline-offset: -1px;
}
.r4 td:nth-child(2)::after {
    content: "";
    position: absolute;
    right: -2px;
    bottom: -2px;
    width: 5px;
    height: 5px;
    background: var(--green);
    border: solid #fff;
    border-width: 1px 0 0 1px;
}
.grid a {
    color: #0563c1;
    text-decoration: underline;
    text-underline-offset: 3px;
}
.vscroll {
    width: 18px;
    margin: 0 2px 0 1px;
    padding: 7px 0 2px;
    display: flex;
    flex-direction: column;
    align-items: center;
    gap: 3px;
    background: #f6f6f6;
    border-radius: 8px;
}
.vscroll svg {
    width: 10px;
    height: 8px;
}
.vtrack {
    flex: 1;
}
.vthumb {
    width: 9px;
    height: 78%;
    border-radius: 5px;
    background: #707070;
}

/* sheet tabs */
.sheet-tabs {
    flex: none;
    height: 32px;
    display: flex;
    align-items: center;
    padding: 0 18px 2px 25px;
    border-top: 1px solid var(--grid);
}
.sheet-tabs > button + button {
    margin-left: 21px;
}
.sheet-tab {
    align-self: flex-start;
    height: 28px;
    margin: -1px 4px 0 45px;
    padding: 3px 8px 0;
    background: #fff;
    border: 1px solid var(--grid);
    border-top: 0;
    border-radius: 0 0 5px 5px;
    font-size: 14px;
}
.sheet-tab span {
    display: block;
    line-height: 21px;
    border-bottom: 2px solid var(--green);
}
.tab-sep {
    width: 1px;
    height: 18px;
    background: var(--line);
}
.add {
    margin-left: 40px;
}
.sheet-tabs .dots {
    margin-left: auto;
    font-size: 14px;
}
.hscroll {
    width: 39%;
    height: 18px;
    margin-left: 6px;
    padding: 0 4px;
    display: flex;
    align-items: center;
    gap: 4px;
    background: #f6f6f6;
    border-radius: 8px;
}
.hscroll svg {
    width: 8px;
    height: 10px;
}
.htrack {
    flex: 1;
}
.hthumb {
    width: 96%;
    height: 9px;
    border-radius: 5px;
    background: #707070;
}

/* status bar */
.status {
    flex: none;
    height: 22px;
    display: flex;
    align-items: center;
    padding: 0 18px 0 8px;
    background: #f4f4f4;
    border-top: 1px solid #c6c6c6;
}
.status > svg {
    margin-left: 18px;
}
.views {
    display: flex;
    align-self: stretch;
    margin: 0 2px 0 auto;
}
.views button {
    width: 40px;
}
.views .current {
    background: #dedede;
}
.zoom-btn {
    width: 16px;
    font-size: 14px;
}
.zoom {
    appearance: none;
    width: 102px;
    height: 1px;
    background: #666;
}
.zoom::-webkit-slider-thumb {
    appearance: none;
    width: 5px;
    height: 11px;
    background: #606060;
}
.percent-label {
    width: 43px;
    text-align: right;
}

/* form dialog */
.dialog {
    position: absolute;
    left: 341px;
    top: 402px;
    width: 452px;
    height: 358px;
    display: flex;
    flex-direction: column;
    background: var(--chrome);
    border: 1px solid #6e6e6e;
    box-shadow: 0 6px 16px rgba(0, 0, 0, 0.35);
    color: #000;
}
.dialog-title {
    height: 31px;
    display: flex;
    align-items: center;
    padding: 0 18px 1px 8px;
    gap: 34px;
    background: #fff;
}
.dialog-title span {
    flex: 1;
}
.dialog-title button {
    width: 12px;
    font-size: 14px;
}
.dialog-body {
    flex: 1;
    display: flex;
    padding: 0 7px 6px 6px;
}
.form-rows {
    flex: 1;
    display: grid;
    grid-template-columns: 102px 210px;
    grid-auto-rows: 23px;
    row-gap: 7px;
    padding-top: 7px;
    white-space: nowrap;
}
.form-rows label {
    font-size: 11px;
    line-height: 22px;
}
.form-rows input {
    padding: 0 3px 2px;
    background: #fff;
    border: 1px solid #abadb3;
}
.dialog-scroll {
    width: 16px;
    display: flex;
    flex-direction: column;
    align-items: center;
    justify-content: space-between;
    padding: 12px 0 3px;
    border-left: 1px solid #fff;
    color: #505050;
}
.dialog-thumb {
    width: 14px;
    height: 92px;
    margin-top: 2px;
    background: #cdcdcd;
}
.dialog-buttons {
    width: 97px;
    display: flex;
    flex-direction: column;
    gap: 9px;
    padding: 8px 0 0 15px;
}
.dialog-buttons span {
    margin-bottom: -1px;
    text-align: center;
}
.dialog-buttons button {
    height: 24px;
    background: #e1e1e1;
    border: 1px solid #adadad;
}
.dialog-buttons button:disabled {
    color: #838383;
}
.dialog-buttons .first {
    margin-top: 9px;
}

/* red annotations drawn over the window */
.mark-line {
    position: absolute;
    left: 38px;
    top: 381px;
    width: 1198px;
    height: 7px;
    background: var(--red);
    box-shadow: 1px 4px 6px rgba(0, 0, 0, 0.45);
}
.mark-box {
    position: absolute;
    left: 432px;
    top: 423px;
    width: 244px;
    height: 237px;
    border: 7px solid var(--red);
    border-radius: 8px;
    filter: drop-shadow(1px 3px 3px rgba(0, 0, 0, 0.6));
    pointer-events: none;
}
.mark-num {
    position: absolute;
    color: var(--red);
    font: 400 44px/48px "Noto Sans CJK JP", sans-serif;
    -webkit-text-stroke: 6px #fff;
    paint-order: stroke fill;
    filter: drop-shadow(2px 3px 3px rgba(0, 0, 0, 0.6));
}
.two {
    left: 551px;
    top: 668px;
}
.three {
    left: 1085px;
    top: 396px;
}
```
